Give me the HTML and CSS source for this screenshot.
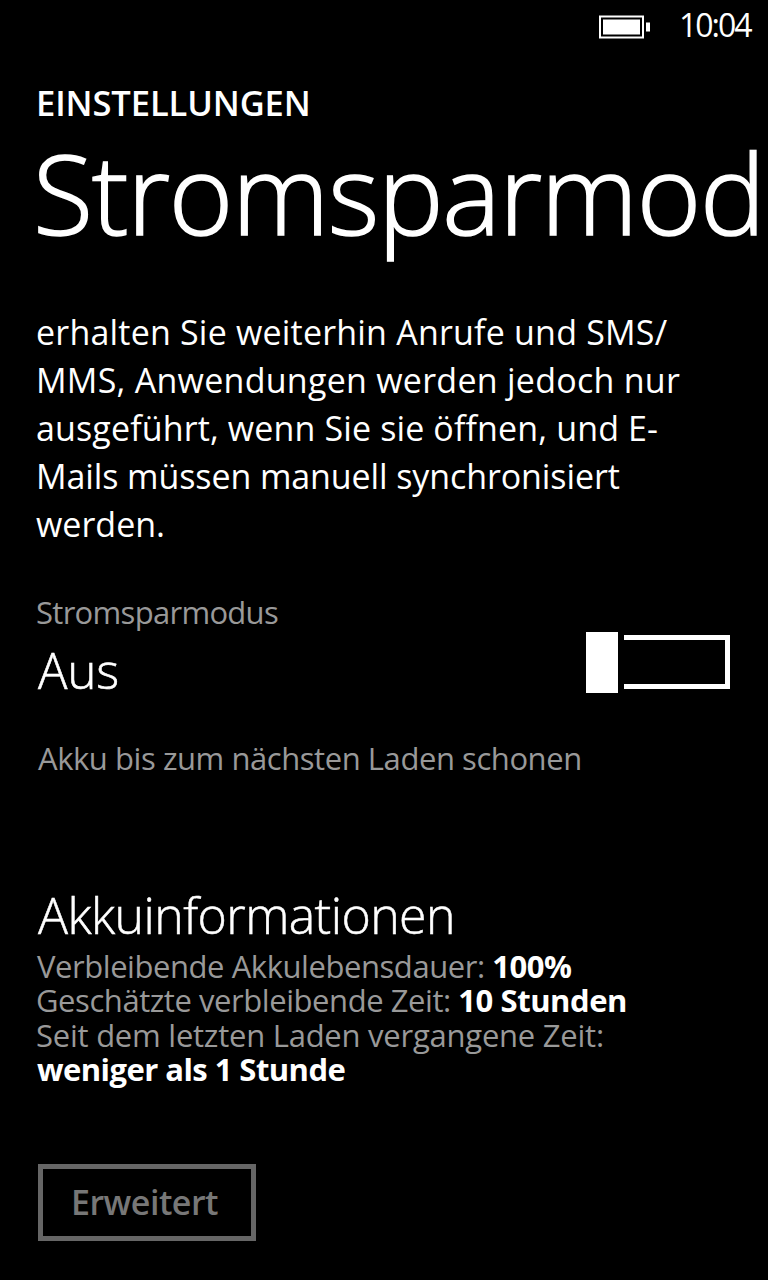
FILE: index.html
```html
<!DOCTYPE html>
<html lang="de">
<head>
  <meta charset="utf-8">
  <title>Stromsparmodus</title>
  <link rel="stylesheet" href="styles.css">
</head>
<body>
  <div class="phone">
    <div class="status-bar">
      <svg class="battery" width="52" height="24" viewBox="0 0 52 24" fill="#fff">
        <rect x="1" y="1.5" width="43" height="21" fill="none" stroke="#fff" stroke-width="2"/>
        <rect x="4" y="4.5" width="37" height="15"/>
        <rect x="47" y="7.5" width="4" height="9"/>
      </svg>
      <span class="clock">10:04</span>
    </div>

    <h2 class="app-title">EINSTELLUNGEN</h2>
    <h1 class="page-title">Stromsparmod</h1>

    <p class="description">
      <span class="line l1">erhalten Sie weiterhin Anrufe und SMS/</span>
      <span class="line l2">MMS, Anwendungen werden jedoch nur</span>
      <span class="line l3">ausgeführt, wenn Sie sie öffnen, und E-</span>
      <span class="line l4">Mails müssen manuell synchronisiert</span>
      <span class="line">werden.</span>
    </p>

    <div class="setting">
      <div>
        <div class="label">Stromsparmodus</div>
        <div class="value">Aus</div>
      </div>
      <div class="toggle">
        <div class="thumb"></div>
        <div class="track"></div>
      </div>
    </div>
    <div class="hint">Akku bis zum nächsten Laden schonen</div>

    <h3 class="section-title">Akkuinformationen</h3>
    <div class="info">
      <div class="row r1">Verbleibende Akkulebensdauer: <b>100%</b></div>
      <div class="row">Geschätzte verbleibende Zeit: <b>10 Stunden</b></div>
      <div class="row r3">Seit dem letzten Laden vergangene Zeit:</div>
      <div class="row r4"><b>weniger als 1 Stunde</b></div>
    </div>

    <button class="button">Erweitert</button>
  </div>
</body>
</html>
```

FILE: styles.css
```css
* {
  margin: 0;
  padding: 0;
  box-sizing: border-box;
}

body {
  background: #000;
  color: #fff;
  font-family: "Open Sans", "Noto Sans", sans-serif;
}

.phone {
  width: 768px;
  height: 1280px;
  padding: 0 36px;
  overflow: hidden;
}

.status-bar {
  display: flex;
  justify-content: flex-end;
  align-items: flex-start;
  height: 50px;
  gap: 28px;
  margin-right: -20px;
}

.battery {
  margin-top: 15px;
}

.clock {
  width: 73px;
  font-size: 32px;
  line-height: 50px;
  letter-spacing: -2px;
}

.app-title {
  margin-top: 30px;
  font-size: 34.5px;
  font-weight: 600;
  line-height: 46px;
  letter-spacing: -0.1px;
}

.page-title {
  height: 150px;
  margin: -4px 0 0 -3px;
  font-size: 110px;
  font-weight: 300;
  line-height: 140px;
  letter-spacing: -1.25px;
  white-space: nowrap;
  -webkit-text-stroke: 1.6px #fff;
}

.description {
  margin-top: 36px;
  font-size: 34px;
  line-height: 48px;
  white-space: nowrap;
}

.line {
  display: block;
}

.l1 {
  letter-spacing: 0.2px;
}

.l2 {
  letter-spacing: 0.26px;
}

.l3 {
  letter-spacing: 0.13px;
}

.l4 {
  letter-spacing: -0.1px;
}

.setting {
  display: flex;
  justify-content: space-between;
  margin-top: 44px;
}

.label,
.hint,
.info {
  color: #999;
  font-size: 31px;
}

.label {
  line-height: 40px;
  letter-spacing: -0.7px;
}

.value {
  margin-left: 2px;
  font-size: 49px;
  font-weight: 300;
  line-height: 76px;
  -webkit-text-stroke: 0.6px #fff;
}

.toggle {
  display: flex;
  gap: 6px;
  width: 144px;
  height: 61px;
  margin: 40px 2px 0 0;
}

.thumb {
  width: 32px;
  background: #fff;
}

.track {
  flex: 1;
  height: 54px;
  margin-top: 3px;
  border: 5px solid #fff;
  border-left: none;
}

.hint {
  margin: 30px 0 0 2px;
  line-height: 40px;
  letter-spacing: -0.44px;
}

.section-title {
  margin: 99px 0 0 2px;
  font-size: 50px;
  font-weight: 300;
  line-height: 76px;
  letter-spacing: -0.6px;
  -webkit-text-stroke: 0.5px #fff;
}

.info {
  margin-top: -4px;
  line-height: 34.3px;
  letter-spacing: -0.44px;
  white-space: nowrap;
}

.info b {
  color: #fff;
}

.r1 {
  margin-left: 1px;
}

.r3 {
  letter-spacing: -0.24px;
}

.r4 {
  margin-left: 1px;
  letter-spacing: -0.55px;
}

.button {
  width: 218px;
  height: 77px;
  margin: 78px 0 0 2px;
  padding: 0 5px 1px 0;
  border: 5px solid #666;
  background: none;
  color: #777;
  font: 600 34px "Open Sans", sans-serif;
  letter-spacing: -0.5px;
}
```
